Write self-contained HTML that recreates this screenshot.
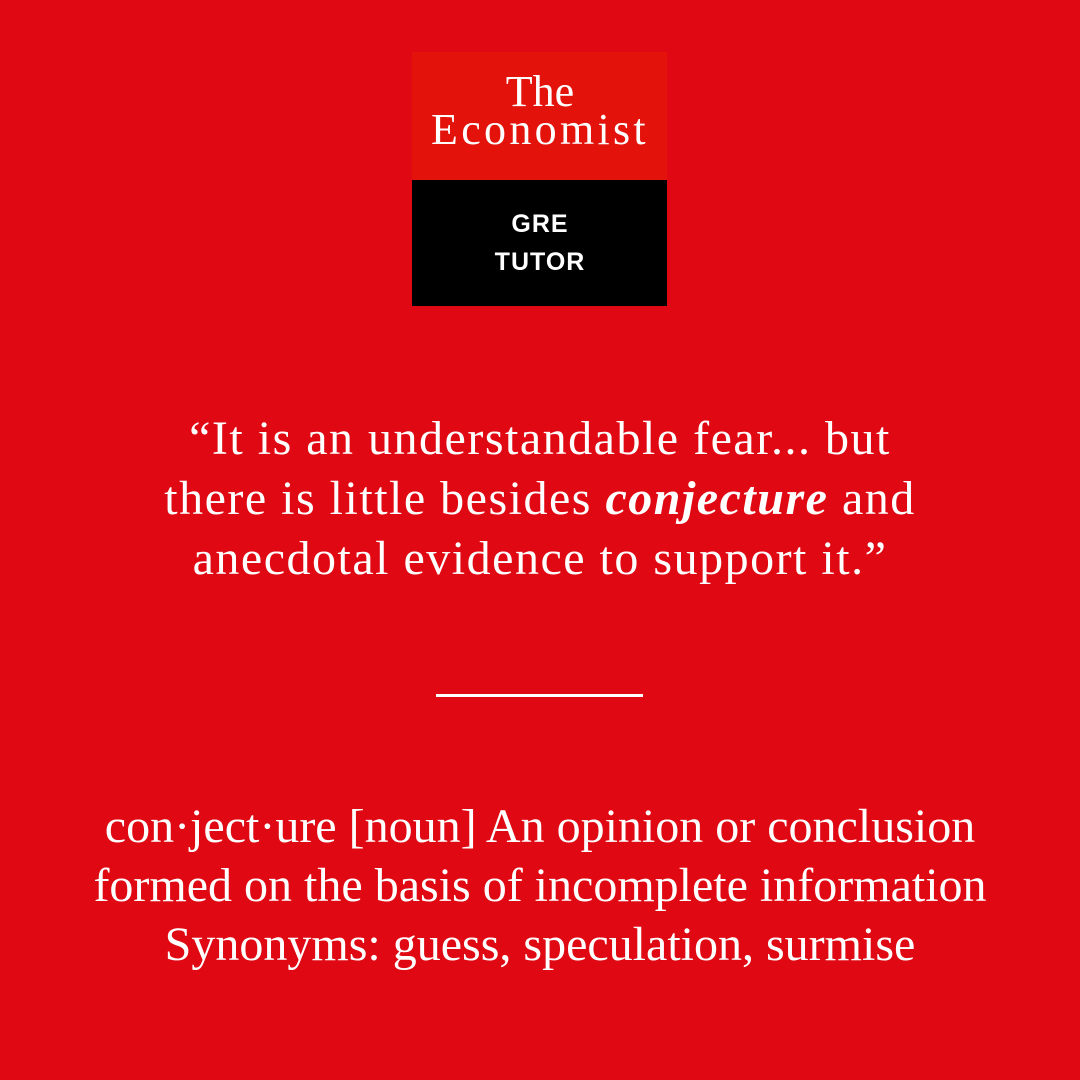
<!DOCTYPE html>
<html><head><style>
html,body{margin:0;padding:0}
body{width:1080px;height:1080px;background:#e00812;position:relative;overflow:hidden;font-family:"Liberation Serif",serif;color:#fff}
.box1{position:absolute;left:412px;top:52px;width:255px;height:128px;background:#e3120b}
.box2{position:absolute;left:412px;top:180px;width:255px;height:126px;background:#000}
.l{position:absolute;left:0;width:1080px;text-align:center;white-space:nowrap}
.s{font-family:"Liberation Sans",sans-serif;font-weight:bold;font-size:25px;letter-spacing:1px}
.q{font-size:48px;line-height:50px;letter-spacing:1.5px}
.d{font-size:48px;line-height:50px;letter-spacing:0}
.rule{position:absolute;left:436px;top:694px;width:207px;height:3px;background:#fff}
</style></head><body>
<div class="box1"></div><div class="box2"></div>
<div class="l" style="top:69px;font-size:44px;line-height:46px">The</div>
<div class="l" style="top:107px;font-size:44px;line-height:46px;letter-spacing:3.3px">Economist</div>
<div class="l s" style="top:209px;line-height:30px">GRE</div>
<div class="l s" style="top:247px;line-height:30px">TUTOR</div>
<div class="l q" style="top:414px">“It is an understandable fear... but</div>
<div class="l q" style="top:474px">there is little besides <b><i>conjecture</i></b> and</div>
<div class="l q" style="top:534px">anecdotal evidence to support it.”</div>
<div class="rule"></div>
<div class="l d" style="top:802px">con·ject·ure [noun] An opinion or conclusion</div>
<div class="l d" style="top:861px">formed on the basis of incomplete information</div>
<div class="l d" style="top:920px">Synonyms: guess, speculation, surmise</div>
</body></html>
